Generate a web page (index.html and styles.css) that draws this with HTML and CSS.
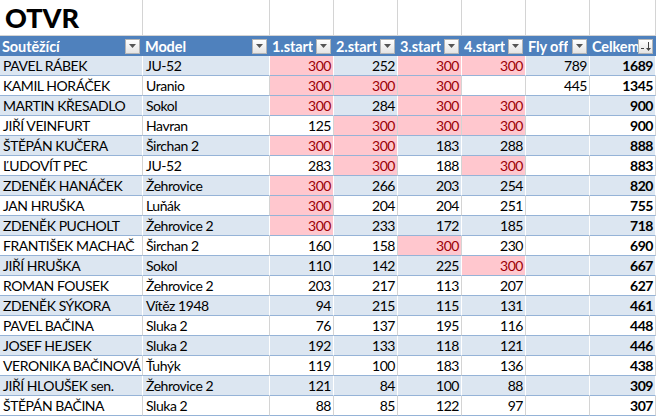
FILE: index.html
```html
<!DOCTYPE html>
<html lang="cs">
<head>
<meta charset="utf-8">
<title>OTVR</title>
<link rel="stylesheet" href="styles.css">
</head>
<body>
<div class="sheet">
  <div class="cell title">OTVR</div>
  <div class="cell title"></div>
  <div class="cell title"></div>
  <div class="cell title"></div>
  <div class="cell title"></div>
  <div class="cell title"></div>
  <div class="cell title"></div>
  <div class="cell title"></div>

  <div class="cell head"><span>Soutěžící</span><i class="dd"><svg width="7" height="4" viewBox="0 0 7 4"><path d="M0 0h7L3.5 4z" fill="#555"/></svg></i></div>
  <div class="cell head"><span>Model</span><i class="dd"><svg width="7" height="4" viewBox="0 0 7 4"><path d="M0 0h7L3.5 4z" fill="#555"/></svg></i></div>
  <div class="cell head"><span>1.start</span><i class="dd"><svg width="7" height="4" viewBox="0 0 7 4"><path d="M0 0h7L3.5 4z" fill="#555"/></svg></i></div>
  <div class="cell head"><span>2.start</span><i class="dd"><svg width="7" height="4" viewBox="0 0 7 4"><path d="M0 0h7L3.5 4z" fill="#555"/></svg></i></div>
  <div class="cell head"><span>3.start</span><i class="dd"><svg width="7" height="4" viewBox="0 0 7 4"><path d="M0 0h7L3.5 4z" fill="#555"/></svg></i></div>
  <div class="cell head"><span>4.start</span><i class="dd"><svg width="7" height="4" viewBox="0 0 7 4"><path d="M0 0h7L3.5 4z" fill="#555"/></svg></i></div>
  <div class="cell head"><span>Fly off</span><i class="dd"><svg width="7" height="4" viewBox="0 0 7 4"><path d="M0 0h7L3.5 4z" fill="#555"/></svg></i></div>
  <div class="cell head"><span>Celkem</span><i class="dd"><svg width="13" height="13" viewBox="0 0 13 13"><path d="M2 8.5h3" stroke="#444" stroke-width="1"/><path d="M9.5 2v8" stroke="#444" stroke-width="1"/><path d="M7 8l2.5 3L12 8z" fill="#444"/></svg></i></div>
</div>
<div class="sheet" id="rows"></div>
<script src="script.js"></script>
</body>
</html>
```
FILE: script.js
```js
const data = [
  ["PAVEL RÁBEK","JU-52","300","252","300","300","789","1689"],
  ["KAMIL HORÁČEK","Uranio","300","300","300","","445","1345"],
  ["MARTIN KŘESADLO","Sokol","300","284","300","300","","900"],
  ["JIŘÍ VEINFURT","Havran","125","300","300","300","","900"],
  ["ŠTĚPÁN KUČERA","Širchan 2","300","300","183","288","","888"],
  ["ĽUDOVÍT PEC","JU-52","283","300","188","300","","883"],
  ["ZDENĚK HANÁČEK","Žehrovice","300","266","203","254","","820"],
  ["JAN HRUŠKA","Luňák","300","204","204","251","","755"],
  ["ZDENĚK PUCHOLT","Žehrovice 2","300","233","172","185","","718"],
  ["FRANTIŠEK MACHAČ","Širchan 2","160","158","300","230","","690"],
  ["JIŘÍ HRUŠKA","Sokol","110","142","225","300","","667"],
  ["ROMAN FOUSEK","Žehrovice 2","203","217","113","207","","627"],
  ["ZDENĚK SÝKORA","Vítěz 1948","94","215","115","131","","461"],
  ["PAVEL BAČINA","Sluka 2","76","137","195","116","","448"],
  ["JOSEF HEJSEK","Sluka 2","192","133","118","121","","446"],
  ["VERONIKA BAČINOVÁ","Ťuhýk","119","100","183","136","","438"],
  ["JIŘÍ HLOUŠEK sen.","Žehrovice 2","121","84","100","88","","309"],
  ["ŠTĚPÁN BAČINA","Sluka 2","88","85","122","97","","307"]
];
const wrap = document.getElementById("rows");
data.forEach((r, i) => {
  const band = i % 2 === 0 ? "band" : "plain";
  r.forEach((v, j) => {
    const c = document.createElement("div");
    c.className = "cell row " + band + (j >= 2 ? " num" : " txt");
    if (j >= 2 && j <= 5 && v === "300") c.className += " hit";
    if (j === 7) c.className += " total";
    c.textContent = v;
    wrap.appendChild(c);
  });
});
```
FILE: styles.css
```css
html, body {
  margin: 0;
  padding: 0;
  background: #fff;
}
body {
  font-family: Lato, "Open Sans", sans-serif;
  font-size: 14px;
  letter-spacing: -0.45px;
  color: #000;
}
.sheet {
  display: grid;
  grid-template-columns: 143px 127px 64px 64px 64px 64px 64px 66px;
  width: 656px;
}
.cell {
  box-sizing: border-box;
  border-right: 1px solid #d4d4d4;
  display: flex;
  align-items: flex-end;
  overflow: hidden;
  white-space: nowrap;
}
.title {
  height: 36px;
  border-bottom: 1px solid #d4d4d4;
  font-weight: 900;
  font-size: 27px;
  letter-spacing: 0;
  padding: 0 0 1px 5px;
  line-height: 32px;
}
.head {
  height: 20px;
  background: #4f81bd;
  border-right: none;
  color: #fff;
  font-weight: 700;
  font-size: 14.5px;
  letter-spacing: -0.1px;
  justify-content: space-between;
  align-items: center;
  padding: 0 3px 0 2px;
  line-height: 20px;
}
.head span {
  padding-top: 1px;
  overflow: hidden;
}
.dd {
  box-sizing: border-box;
  width: 15px;
  height: 15px;
  border: 1px solid #b5b5b5;
  background: linear-gradient(#ffffff, #e4e4e4);
  display: flex;
  align-items: center;
  justify-content: center;
  flex: none;
}
.row {
  height: 20px;
  border-bottom: 1px solid #95b3d7;
  line-height: 18px;
  padding: 0 2px 0 3px;
}
.row.band {
  background: #dce6f1;
  border-right-color: #ffffff;
}
.row.plain {
  background: #ffffff;
}
.num {
  justify-content: flex-end;
}
.hit {
  background: #ffc7ce !important;
  color: #9c0006;
}
.total {
  font-weight: 700;
  padding-right: 2px;
}
```
